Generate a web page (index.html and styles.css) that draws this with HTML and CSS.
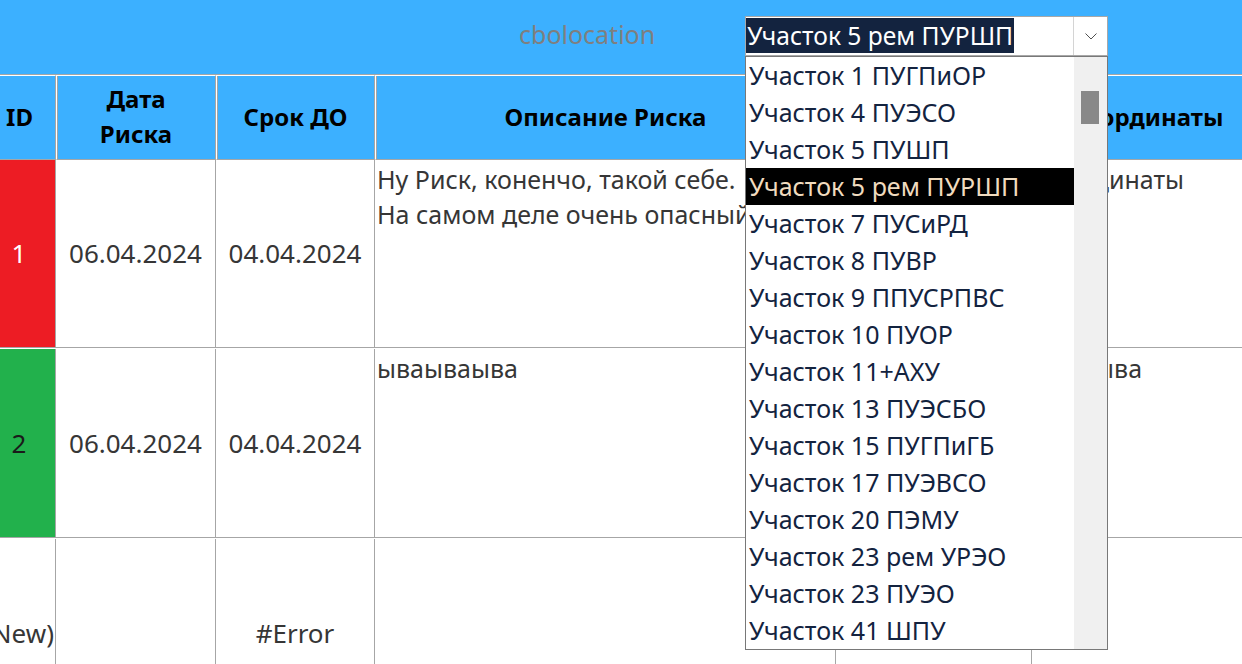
FILE: index.html
```html
<!DOCTYPE html>
<html lang="ru">
<head>
<meta charset="utf-8">
<title>Риски</title>
<link rel="stylesheet" href="styles.css">
</head>
<body>
<div class="topbar">
  <span class="label">cbolocation</span>
  <div class="combo">
    <span class="combo-text">Участок 5 рем ПУРШП</span>
    <span class="combo-btn">
      <svg width="12" height="7" viewBox="0 0 12 7"><polyline points="0.5,0.5 6,6 11.5,0.5" fill="none" stroke="#505050" stroke-width="1"/></svg>
    </span>
  </div>
</div>

<div class="table">
  <div class="thead">
    <div class="th">ID</div>
    <div class="th">Дата<br>Риска</div>
    <div class="th">Срок ДО</div>
    <div class="th">Описание Риска</div>
    <div class="th">Участок</div>
    <div class="th">Координаты</div>
  </div>
  <div class="tbody">
    <div class="td id red">1</div>
    <div class="td center">06.04.2024</div>
    <div class="td center">04.04.2024</div>
    <div class="td text">Ну Риск, коненчо, такой себе.<br>На самом деле очень опасный риск</div>
    <div class="td text"></div>
    <div class="td text">Координаты</div>

    <div class="td id green">2</div>
    <div class="td center">06.04.2024</div>
    <div class="td center">04.04.2024</div>
    <div class="td text">ываываыва</div>
    <div class="td text"></div>
    <div class="td text">вываыва</div>

    <div class="td id">(New)</div>
    <div class="td center"></div>
    <div class="td center">#Error</div>
    <div class="td text"></div>
    <div class="td text"></div>
    <div class="td text"></div>
  </div>
</div>

<div class="droplist">
  <div class="items">
    <div class="item">Участок 1 ПУГПиОР</div>
    <div class="item">Участок 4 ПУЭСО</div>
    <div class="item">Участок 5 ПУШП</div>
    <div class="item selected">Участок 5 рем ПУРШП</div>
    <div class="item">Участок 7 ПУСиРД</div>
    <div class="item">Участок 8 ПУВР</div>
    <div class="item">Участок 9 ППУСРПВС</div>
    <div class="item">Участок 10 ПУОР</div>
    <div class="item">Участок 11+АХУ</div>
    <div class="item">Участок 13 ПУЭСБО</div>
    <div class="item">Участок 15 ПУГПиГБ</div>
    <div class="item">Участок 17 ПУЭВСО</div>
    <div class="item">Участок 20 ПЭМУ</div>
    <div class="item">Участок 23 рем УРЭО</div>
    <div class="item">Участок 23 ПУЭО</div>
    <div class="item">Участок 41 ШПУ</div>
  </div>
  <div class="scrollbar"><div class="thumb"></div></div>
</div>
</body>
</html>
```

FILE: styles.css
```css
html, body {
  margin: 0;
  padding: 0;
}
body {
  width: 1242px;
  height: 664px;
  overflow: hidden;
  position: relative;
  background: #ffffff;
  font-family: "Noto Sans", "Open Sans", sans-serif;
}

.topbar {
  height: 74px;
  box-sizing: border-box;
  padding-top: 16px;
  background: #3cb0ff;
  display: flex;
  align-items: flex-start;
}
.label {
  margin-left: 519px;
  font-size: 25px;
  line-height: 37px;
  color: #7f7f7f;
}
.combo {
  margin-left: 90px;
  width: 363px;
  height: 40px;
  box-sizing: border-box;
  border: 1px solid #a8a8a8;
  background: #ffffff;
  display: flex;
  align-items: flex-start;
}
.combo-text {
  margin-top: 1px;
  height: 35px;
  line-height: 35px;
  padding: 0 1px 0 1px;
  background: #13233f;
  color: #ffffff;
  font-size: 24.6px;
  white-space: nowrap;
}
.combo-btn {
  margin-left: auto;
  width: 33px;
  height: 38px;
  border-left: 1px solid #d4d4d4;
  display: flex;
  align-items: center;
  justify-content: center;
}

.table {
  margin-left: -17px;
}
.thead, .tbody {
  display: grid;
  grid-template-columns: 73px 160px 159px 461px 196px 228px;
}
.thead {
  border-top: 1px solid #a6a6a6;
}
.th {
  height: 85px;
  box-sizing: border-box;
  padding-bottom: 3px;
  background: #3cb0ff;
  border-top: 1px solid #ffffff;
  border-left: 1px solid #ffffff;
  border-right: 1px solid #a6a6a6;
  border-bottom: 1px solid #a6a6a6;
  box-shadow: inset 1px 0 0 #a6a6a6;
  display: flex;
  align-items: center;
  justify-content: center;
  text-align: center;
  font-weight: 700;
  font-size: 24px;
  line-height: 35px;
  color: #000000;
  white-space: nowrap;
}
.tbody {
  row-gap: 1px;
}
.td {
  height: 188px;
  box-sizing: border-box;
  border-right: 1px solid #a6a6a6;
  border-bottom: 1px solid #a6a6a6;
  color: #363636;
  font-size: 25px;
  line-height: 35px;
  overflow: hidden;
  white-space: nowrap;
}
.tbody .td:nth-child(n+7) {
  height: 189px;
}
.center, .id {
  display: flex;
  align-items: center;
  justify-content: center;
  font-size: 26px;
}
.text {
  padding: 2px 2px 0 2px;
}
.red {
  background: #ed1c24;
  color: #ffffff;
}
.green {
  background: #22b14c;
  color: #1a1a1a;
}

.droplist {
  position: absolute;
  left: 745px;
  top: 56px;
  width: 363px;
  height: 594px;
  box-sizing: border-box;
  border: 1px solid #787878;
  background: #ffffff;
  display: flex;
}
.items {
  width: 328px;
}
.item {
  height: 37px;
  line-height: 37px;
  padding-left: 3px;
  font-size: 25px;
  color: #13233f;
  white-space: nowrap;
}
.item.selected {
  background: #000000;
  color: #f0dbbf;
}
.scrollbar {
  width: 33px;
  background: #f0f0f0;
}
.thumb {
  margin-top: 34px;
  margin-left: 7px;
  width: 18px;
  height: 33px;
  background: #888888;
}
```
